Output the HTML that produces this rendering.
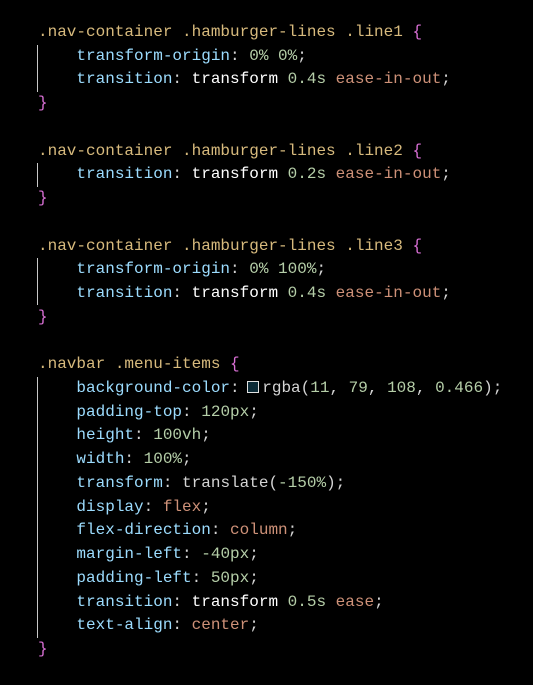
<!DOCTYPE html>
<html><head><meta charset="utf-8"><style>
html,body{margin:0;padding:0;background:#000;width:533px;height:685px;overflow:hidden}
.code{position:absolute;left:38px;top:21px;font-family:"Liberation Mono",monospace;font-size:16px;line-height:23.73px;color:#d4d4d4;white-space:pre}
.s{color:#d7ba7d}.p{color:#9cdcfe}.n{color:#b5cea8}.v{color:#ce9178}.b{color:#da70d6}.w{color:#ffffff}
.g{position:absolute;left:37px;width:1px;background:#c8c8c8}
.sw{display:inline-block;width:10px;height:10px;border:1px solid #e0e0e0;background:#0b2a36;vertical-align:-1px;margin:0 3px 0 -2px}
</style></head><body>
<div class="g" style="top:45px;height:47px"></div>
<div class="g" style="top:163px;height:24px"></div>
<div class="g" style="top:258px;height:47px"></div>
<div class="g" style="top:377px;height:261px"></div>
<div class="code"><span class="s">.nav-container .hamburger-lines .line1</span> <span class="b">{</span>
    <span class="p">transform-origin</span>: <span class="n">0%</span> <span class="n">0%</span>;
    <span class="p">transition</span>: <span class="w">transform</span> <span class="n">0.4s</span> <span class="v">ease-in-out</span>;
<span class="b">}</span>

<span class="s">.nav-container .hamburger-lines .line2</span> <span class="b">{</span>
    <span class="p">transition</span>: <span class="w">transform</span> <span class="n">0.2s</span> <span class="v">ease-in-out</span>;
<span class="b">}</span>

<span class="s">.nav-container .hamburger-lines .line3</span> <span class="b">{</span>
    <span class="p">transform-origin</span>: <span class="n">0%</span> <span class="n">100%</span>;
    <span class="p">transition</span>: <span class="w">transform</span> <span class="n">0.4s</span> <span class="v">ease-in-out</span>;
<span class="b">}</span>

<span class="s">.navbar .menu-items</span> <span class="b">{</span>
    <span class="p">background-color</span>: <span class="sw"></span>rgba(<span class="n">11</span>, <span class="n">79</span>, <span class="n">108</span>, <span class="n">0.466</span>);
    <span class="p">padding-top</span>: <span class="n">120px</span>;
    <span class="p">height</span>: <span class="n">100vh</span>;
    <span class="p">width</span>: <span class="n">100%</span>;
    <span class="p">transform</span>: translate(<span class="n">-150%</span>);
    <span class="p">display</span>: <span class="v">flex</span>;
    <span class="p">flex-direction</span>: <span class="v">column</span>;
    <span class="p">margin-left</span>: <span class="n">-40px</span>;
    <span class="p">padding-left</span>: <span class="n">50px</span>;
    <span class="p">transition</span>: <span class="w">transform</span> <span class="n">0.5s</span> <span class="v">ease</span>;
    <span class="p">text-align</span>: <span class="v">center</span>;
<span class="b">}</span></div>
</body></html>
